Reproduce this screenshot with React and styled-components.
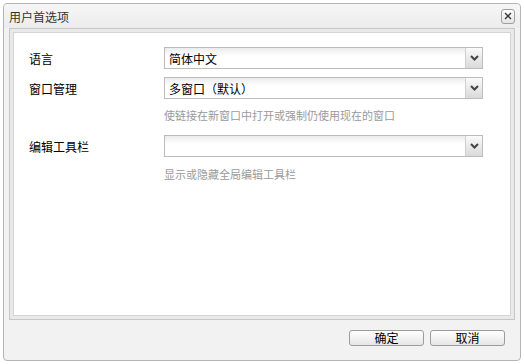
import styled, { createGlobalStyle } from "styled-components";

const Global = createGlobalStyle`
  body {
    margin: 0;
    background: #fff;
    font-family: "Noto Sans CJK SC", "Noto Sans", sans-serif;
    text-spacing-trim: space-all;
  }
`;

const Dialog = styled.div`
  margin: 3px;
  width: 518px;
  height: 358px;
  box-sizing: border-box;
  border: 1px solid #b4b4b4;
  border-radius: 4px;
  background: #f2f2f2;
  display: flex;
  flex-direction: column;
`;

const TitleBar = styled.div`
  height: 24px;
  display: flex;
  align-items: center;
  justify-content: space-between;
  padding: 0 5px 0 5px;
  background: linear-gradient(#f6f6f6, #ececec);
  border-radius: 4px 4px 0 0;
`;

const Title = styled.span`
  font-size: 12px;
  color: #333;
`;

const CloseBtn = styled.button`
  width: 14px;
  height: 15px;
  padding: 0;
  box-sizing: border-box;
  border: 1px solid #a0a0a0;
  border-radius: 3px;
  background: linear-gradient(#ffffff, #e4e4e4);
  display: flex;
  align-items: center;
  justify-content: center;
`;

const Panel = styled.div`
  margin: 0 5px;
  height: 292px;
  box-sizing: border-box;
  border: 1px solid #c6c6c6;
  background: #e9e9e9;
  padding: 3px;
`;

const Inner = styled.div`
  height: 100%;
  box-sizing: border-box;
  border: 1px solid #d4d4d4;
  background: #fff;
  padding: 14px 0 0 15px;
`;

const Row = styled.div`
  display: flex;
  align-items: center;
  margin-top: ${(p) => p.$gap || 0}px;
`;

const Label = styled.div`
  width: 135px;
  font-size: 12px;
  color: #000;
`;

const Select = styled.div`
  width: 319px;
  height: 22px;
  box-sizing: border-box;
  border: 1px solid #bcbcbc;
  background: linear-gradient(#ececec, #ffffff 40%);
  display: flex;
  align-items: center;
`;

const Value = styled.div`
  flex: 1;
  padding-left: 4px;
  font-size: 12px;
  color: #000;
`;

const Arrow = styled.div`
  width: 17px;
  height: 100%;
  box-sizing: border-box;
  border-left: 1px solid #d0d0d0;
  background: linear-gradient(#fafafa, #dadada);
  display: flex;
  align-items: center;
  justify-content: center;
`;

const Hint = styled.div`
  margin: ${(p) => p.$top}px 0 0 135px;
  font-size: 11px;
  line-height: 14px;
  color: #9a9a9a;
`;

const Footer = styled.div`
  flex: 1;
  display: flex;
  justify-content: flex-end;
  align-items: flex-start;
  gap: 6px;
  padding: 10px 15px 0 0;
`;

const Button = styled.button`
  width: 75px;
  height: 16px;
  padding: 0;
  box-sizing: border-box;
  border: 1px solid #9c9c9c;
  border-radius: 3px;
  background: linear-gradient(#ffffff, #e6e6e6);
  font-family: inherit;
  font-size: 12px;
  line-height: 14px;
  color: #000;
`;

const Chevron = () => (
  <svg width="9" height="6" viewBox="0 0 9 6">
    <path d="M1 1 L4.5 4.5 L8 1" stroke="#444" strokeWidth="2" fill="none" />
  </svg>
);

const Dropdown = ({ value }) => (
  <Select>
    <Value>{value}</Value>
    <Arrow>
      <Chevron />
    </Arrow>
  </Select>
);

export default function App() {
  return (
    <>
      <Global />
      <Dialog>
        <TitleBar>
          <Title>用户首选项</Title>
          <CloseBtn>
            <svg width="8" height="8" viewBox="0 0 8 8">
              <path d="M1 1 L7 7 M7 1 L1 7" stroke="#333" strokeWidth="1.3" />
            </svg>
          </CloseBtn>
        </TitleBar>
        <Panel>
          <Inner>
            <Row>
              <Label>语言</Label>
              <Dropdown value="简体中文" />
            </Row>
            <Row $gap={8}>
              <Label>窗口管理</Label>
              <Dropdown value="多窗口（默认）" />
            </Row>
            <Hint $top={9}>使链接在新窗口中打开或强制仍使用现在的窗口</Hint>
            <Row $gap={13}>
              <Label>编辑工具栏</Label>
              <Dropdown value="" />
            </Row>
            <Hint $top={10}>显示或隐藏全局编辑工具栏</Hint>
          </Inner>
        </Panel>
        <Footer>
          <Button>确定</Button>
          <Button>取消</Button>
        </Footer>
      </Dialog>
    </>
  );
}
